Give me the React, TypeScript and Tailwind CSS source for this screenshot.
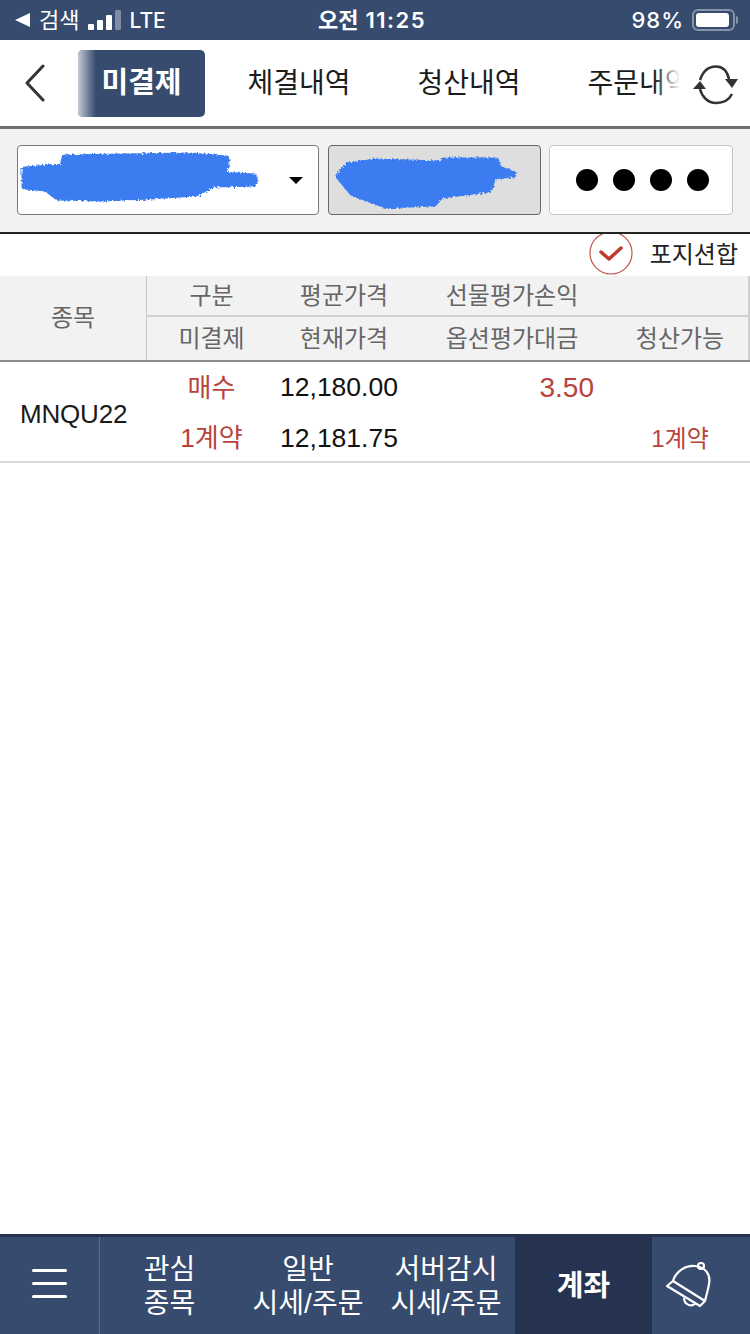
const tabs = ['체결내역', '청산내역', '주문내역']

function Scribble({ id, points, className, viewBox }: { id: string; points: string; className: string; viewBox: string }) {
  return (
    <svg className={className} viewBox={viewBox} fill="none">
      <filter id={id} x="-5%" y="-20%" width="110%" height="140%">
        <feTurbulence type="fractalNoise" baseFrequency="0.5" numOctaves="3" seed="4" />
        <feDisplacementMap in="SourceGraphic" scale="5" />
        <feGaussianBlur stdDeviation="0.4" />
      </filter>
      <polygon points={points} fill="#3b7cf0" stroke="#3b7cf0" strokeWidth="7" strokeLinejoin="round" filter={`url(#${id})`} />
    </svg>
  )
}

function StatusBar() {
  return (
    <div className="relative h-10 bg-[#364b6e] text-white flex items-center justify-between pl-[15px] pr-[12px] font-['Inter','Noto_Sans_CJK_KR',sans-serif]">
      <div className="flex items-center">
        <svg width="16" height="14" viewBox="0 0 16 14" fill="white">
          <path d="M0 7 15 0v14z" />
        </svg>
        <span className="ml-2 text-[22px] leading-none">검색</span>
        <div className="ml-[9px] flex items-end gap-[3px] h-5">
          <div className="w-[6px] h-[6px] rounded-[1px] bg-white" />
          <div className="w-[6px] h-[10px] rounded-[1px] bg-white" />
          <div className="w-[6px] h-[15px] rounded-[1px] bg-white" />
          <div className="w-[6px] h-[20px] rounded-[1px] bg-[#7f8ca3]" />
        </div>
        <span className="ml-[8px] text-[21px] leading-none font-medium">LTE</span>
      </div>
      <div className="absolute left-[318px] top-0 h-10 flex items-center gap-[7px] text-[22px] font-semibold">
        <span>오전</span>
        <span className="tracking-[1.5px]">11:25</span>
      </div>
      <div className="flex items-center">
        <span className="text-[22px] leading-none font-medium tracking-[1px]">98%</span>
        <div className="ml-2 flex items-center">
          <div className="w-[43px] h-[22px] rounded-[6px] border-2 border-[#8693a8] p-[2px]">
            <div className="w-[33px] h-full rounded-[3px] bg-white" />
          </div>
          <div className="ml-[1px] w-[2px] h-2 rounded-r bg-[#8693a8]" />
        </div>
      </div>
    </div>
  )
}

function TopTabs() {
  return (
    <div className="h-[89px] bg-white border-b-[3px] border-[#6d6d6d] flex items-start">
      <div className="w-[78px] h-full flex items-center pl-[24px]">
        <svg width="22" height="38" viewBox="0 0 22 38" fill="none" stroke="#333333" strokeWidth="3" strokeLinecap="round" strokeLinejoin="round">
          <path d="M19 2 3 19l16 17" />
        </svg>
      </div>
      <div className="relative w-[602px] h-full overflow-hidden flex items-start pt-[10px]">
        <div className="relative w-[127px] h-[67px] shrink-0 rounded-[5px] bg-[#364b6e] overflow-hidden flex items-center justify-center text-white text-[29px] font-bold">
          <div className="absolute inset-y-0 left-0 w-[18px] bg-gradient-to-r from-[#c4cbd6] to-[#364b6e]" />
          <span className="relative">미결제</span>
        </div>
        <div className="ml-[9px] flex shrink-0">
          {tabs.map(tab => (
            <div key={tab} className="w-[170px] h-[68px] shrink-0 flex items-center justify-center text-[28px] text-[#1c1c1c]">
              {tab}
            </div>
          ))}
        </div>
        <div className="absolute inset-y-0 right-0 w-[26px] bg-gradient-to-r from-white/0 to-white" />
      </div>
      <div className="flex-1 h-full flex items-center pl-[13px]">
        <svg className="mt-[4px]" width="46" height="40" viewBox="0 0 46 40" fill="none">
          <path d="M7 15C10 6 16 1.500 23 1.500c6 0 11 4 13 12.500" stroke="#333333" strokeWidth="2.5" />
          <path d="M32 14h13l-6 9z" fill="#333333" />
          <path d="M7 24c2 8 8 14 16 14 7 0 13-3 16-9" stroke="#333333" strokeWidth="2.5" />
          <path d="M0 24h13L7 16z" fill="#333333" />
        </svg>
      </div>
    </div>
  )
}

function FilterBar() {
  return (
    <div className="h-[103px] bg-[#f2f2f2] pl-[17px] pt-4 flex gap-[9px]">
      <div className="relative w-[302px] h-[70px] rounded-[4px] bg-white border border-[#777777]">
        <Scribble
          id="rough-account"
          viewBox="0 0 260 70"
          className="absolute left-0 top-0 w-[260px] h-[70px]"
          points="7,24 45,21 47,12 103,11 173,10 208,13 208,20 202,29 236,31 236,37 195,38 178,47 133,50 83,52 40,51 28,42 7,40"
        />
        <div className="absolute left-[271px] top-[31px] w-0 h-0 border-x-[7px] border-t-[7px] border-x-transparent border-t-black" />
      </div>
      <div className="relative w-[213px] h-[70px] rounded-[4px] bg-[#dedede] border border-[#666666]">
        <Scribble
          id="rough-name"
          viewBox="0 0 213 70"
          className="absolute left-0 top-0 w-[213px] h-[70px]"
          points="10,30 19,20 47,16 112,18 117,15 167,15 169,23 184,28 164,30 160,43 112,49 105,57 57,59 24,47"
        />
      </div>
      <div className="ml-[-1px] w-[184px] h-[70px] rounded-[4px] bg-white border border-[#c4c4c4] flex items-center justify-center gap-[15px] pl-[2px]">
        <div className="w-[22px] h-[22px] rounded-full bg-black" />
        <div className="w-[22px] h-[22px] rounded-full bg-black" />
        <div className="w-[22px] h-[22px] rounded-full bg-black" />
        <div className="w-[22px] h-[22px] rounded-full bg-black" />
      </div>
    </div>
  )
}

function PositionToggle() {
  return (
    <div className="h-11 border-t-2 border-[#222222] bg-white flex items-center justify-end pr-3 overflow-hidden">
      <svg className="mr-[17px] mt-[-4px]" width="44" height="44" viewBox="0 0 44 44" fill="none">
        <circle cx="22" cy="22" r="21" stroke="#c2564b" strokeWidth="1.2" />
        <path d="M12 21l8 7 12-11" stroke="#c0392f" strokeWidth="3.5" strokeLinecap="round" strokeLinejoin="round" />
      </svg>
      <span className="text-[24px] leading-none text-[#222222]">포지션합</span>
    </div>
  )
}

function PositionTable() {
  return (
    <div>
      <div className="h-[86px] bg-[#f2f2f2] border-b-2 border-[#8c8c8c] flex text-[24px] text-[#666666] pr-[1px]">
        <div className="w-[147px] shrink-0 flex items-center justify-center border-r border-[#c8c8c8]">종목</div>
        <div className="flex-1 flex flex-col border-r-2 border-[#d0d0d0]">
          <div className="h-[41px] border-b-2 border-[#d0d0d0] grid grid-cols-[129px_136px_200px_136px] items-center text-center">
            <span>구분</span>
            <span>평균가격</span>
            <span>선물평가손익</span>
            <span />
          </div>
          <div className="flex-1 grid grid-cols-[129px_136px_200px_136px] items-center text-center">
            <span>미결제</span>
            <span>현재가격</span>
            <span>옵션평가대금</span>
            <span>청산가능</span>
          </div>
        </div>
      </div>
      <div className="h-[101px] border-b-2 border-[#d8d8d8] bg-white flex">
        <div className="w-[147px] shrink-0 pl-5 flex items-center text-[26px] tracking-[-0.2px] text-[#1a1a1a] pt-[5px]">MNQU22</div>
        <div className="flex-1 flex flex-col text-[26px]">
          <div className="h-[52px] grid grid-cols-[129px_136px_200px_136px] items-center text-center">
            <span className="text-[#b8433c]">매수</span>
            <span className="text-[26.5px] text-[#111111] pr-[10px]">12,180.00</span>
            <span className="text-[28px] text-[#b8433c] text-right pr-[18px]">3.50</span>
            <span />
          </div>
          <div className="h-[47px] pt-[2px] grid grid-cols-[129px_136px_200px_136px] items-center text-center">
            <span className="text-[#b8433c]">1계약</span>
            <span className="text-[26.5px] text-[#111111] pr-[10px]">12,181.75</span>
            <span />
            <span className="text-[24px] text-[#b8433c]">1계약</span>
          </div>
        </div>
      </div>
    </div>
  )
}

function BottomBar() {
  return (
    <div className="h-[100px] bg-[#364b6e] border-t-[3px] border-[#253350] flex text-white text-[28px] leading-[34px] text-center">
      <div className="w-[100px] border-r border-[#5a6c8a] flex flex-col items-center justify-center gap-[10px] pb-[4px]">
        <div className="w-[35px] h-[3px] rounded-full bg-white" />
        <div className="w-[35px] h-[3px] rounded-full bg-white" />
        <div className="w-[35px] h-[3px] rounded-full bg-white" />
      </div>
      <div className="w-[139px] flex items-center justify-center pt-[3px]">
        <span>관심<br />종목</span>
      </div>
      <div className="w-[138px] flex items-center justify-center pt-[3px]">
        <span>일반<br />시세/주문</span>
      </div>
      <div className="w-[138px] flex items-center justify-center pt-[3px]">
        <span>서버감시<br />시세/주문</span>
      </div>
      <div className="w-[137px] bg-[#253350] flex items-center justify-center font-bold text-[29px]">계좌</div>
      <div className="flex-1 flex items-center pl-[12px]">
        <svg width="50" height="52" viewBox="0 0 50 52" fill="none" stroke="white" strokeWidth="2.2" strokeLinejoin="round">
          <circle cx="37" cy="6" r="3" />
          <path d="M9 21C12 11 22 5 31 6c10 1 16 8 14 18-1 7-3 12-4 17" />
          <path d="M9 21 3 26l33 20 5-5z" />
          <path d="M20 38c0 6 7 10 12 5" />
        </svg>
      </div>
    </div>
  )
}

export default function App() {
  return (
    <div className="w-[750px] h-[1334px] flex flex-col bg-white font-['Liberation_Sans','Noto_Sans_CJK_KR',sans-serif] overflow-hidden">
      <StatusBar />
      <TopTabs />
      <FilterBar />
      <PositionToggle />
      <PositionTable />
      <div className="flex-1" />
      <BottomBar />
    </div>
  )
}
